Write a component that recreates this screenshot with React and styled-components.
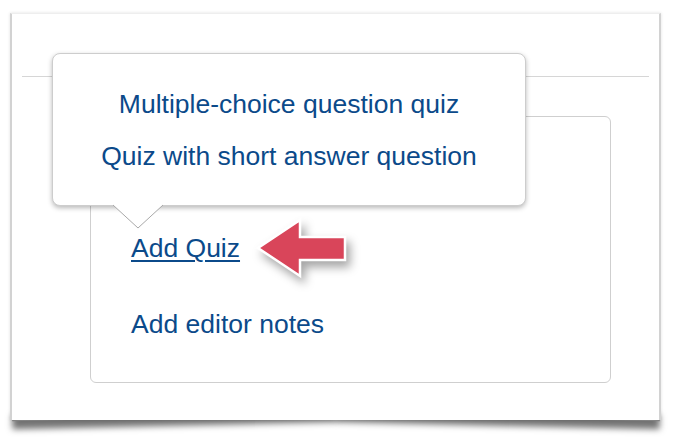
import React from "react";
import styled, { createGlobalStyle } from "styled-components";

const GlobalStyle = createGlobalStyle`
  html, body {
    margin: 0;
    padding: 0;
    background: #ffffff;
  }
  body {
    font-family: "Liberation Sans", Arial, Helvetica, sans-serif;
  }
`;

const Page = styled.div`
  position: relative;
  z-index: 0;
  width: 678px;
  height: 446px;
  padding: 13px 0 0 10px;
  box-sizing: border-box;
`;

const Frame = styled.div`
  position: relative;
  width: 651px;
  height: 407px;
  background: #ffffff;
  box-sizing: border-box;
  border-left: 2px solid #d2d2d2;
  border-right: 2px solid #d2d2d2;
  border-top: 1px solid #eeeeee;
  box-shadow: 0 0 3px rgba(0, 0, 0, 0.12);
  padding: 62px 10px 0 10px;

  /* curled page shadow */
  &::before,
  &::after {
    content: "";
    position: absolute;
    z-index: -1;
    bottom: 6px;
    width: 50%;
    height: 14px;
    background: #888;
    box-shadow: 0 8px 6px rgba(0, 0, 0, 0.55);
  }
  &::before {
    left: 0;
    transform: rotate(-1.3deg);
    transform-origin: right center;
  }
  &::after {
    right: 0;
    transform: rotate(1.3deg);
    transform-origin: left center;
  }
`;

const Rule = styled.div`
  height: 1px;
  background: #d6d6d6;
`;

const Panel = styled.div`
  margin: 39px 38px 0 68px;
  border: 1.5px solid #cfcfcf;
  border-radius: 6px;
  padding: 116px 0 43px 40px;
  display: flex;
  flex-direction: column;
  gap: 46px;
`;

const Item = styled.div`
  position: relative;
  display: flex;
  align-items: center;
  height: 30px;
`;

const Link = styled.a`
  font-size: 26.5px;
  line-height: 30px;
  color: #0b4a8a;
  text-decoration: ${(p) => (p.$active ? "underline" : "none")};
  text-decoration-thickness: 1.5px;
  text-underline-offset: 3px;
  cursor: pointer;
`;

const Pointer = styled.svg`
  margin-left: 16px;
  overflow: visible;
  filter: drop-shadow(4px 6px 5px rgba(0, 0, 0, 0.35));
`;

const Popover = styled.div`
  position: absolute;
  left: -79px;
  bottom: calc(100% + 27px);
  width: 474px;
  box-sizing: border-box;
  background: #ffffff;
  border: 1px solid #cdcdcd;
  border-radius: 8px;
  box-shadow: 0 2px 5px rgba(0, 0, 0, 0.28);
  padding: 35px 0 34px;
  display: flex;
  flex-direction: column;
  align-items: center;
  gap: 22px;
`;

const Caret = styled.svg`
  position: absolute;
  left: 59px;
  top: 100%;
  margin-top: -1px;
`;

const Option = styled.a`
  font-size: 26.5px;
  line-height: 30px;
  color: #0b4a8a;
  cursor: pointer;
`;

export default function App() {
  return (
    <>
      <GlobalStyle />
      <Page>
        <Frame>
          <Rule />
          <Panel>
            <Item>
              <Popover>
                <Option>Multiple-choice question quiz</Option>
                <Option>Quiz with short answer question</Option>
                <Caret width="52" height="26" viewBox="0 0 52 26">
                  <polygon points="0,0 52,0 26,24" fill="#ffffff" />
                  <polyline
                    points="1,1 26,24 51,1"
                    fill="none"
                    stroke="#a9a9a9"
                    strokeWidth="1"
                  />
                </Caret>
              </Popover>
              <Link $active>Add Quiz</Link>
              <Pointer width="92" height="60" viewBox="0 0 92 60">
                <polygon
                  points="2,30 44,2 44,19 89,19 89,42 44,42 44,58"
                  fill="#d9455a"
                  stroke="#ffffff"
                  strokeWidth="2.5"
                  strokeLinejoin="miter"
                />
              </Pointer>
            </Item>
            <Item>
              <Link>Add editor notes</Link>
            </Item>
          </Panel>
        </Frame>
      </Page>
    </>
  );
}
